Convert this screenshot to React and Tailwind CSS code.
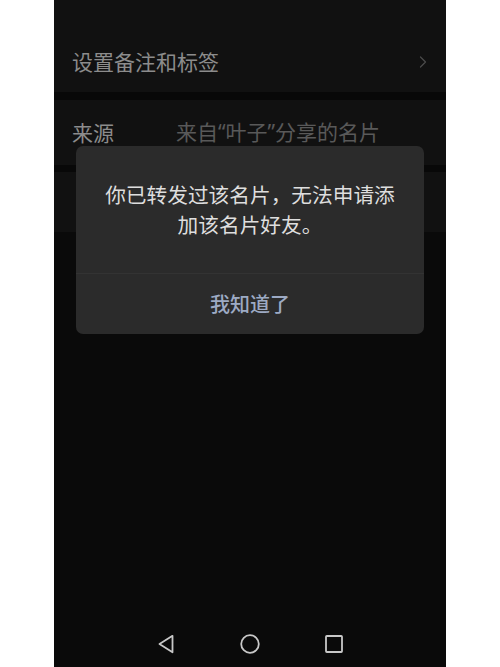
import { ChevronRight } from "lucide-react"

const FONT = "font-['Noto_Sans_CJK_SC','Noto_Sans',sans-serif]"

function Cell({ children, className = "" }) {
  return <div className={`flex items-center bg-[#111111] px-[18px] ${className}`}>{children}</div>
}

export default function App() {
  return (
    <div className={`flex h-[667px] w-[500px] justify-center bg-white ${FONT}`}>
      <div className="relative flex h-full w-[392px] flex-col bg-[#0a0a0a]">
        <Cell className="h-[92px] pt-[32px]">
          <span className="flex-1 text-[21px] text-[#8c8c8c]">设置备注和标签</span>
          <ChevronRight size={20} strokeWidth={1.5} className="mr-[-5px] text-[#4a4a4a]" />
        </Cell>
        <div className="h-[8px] bg-[#080808]" />
        <Cell className="h-[65px]">
          <span className="w-[104px] text-[21px] text-[#8c8c8c]">来源</span>
          <span className="font-['Noto_Sans','Noto_Sans_CJK_SC',sans-serif] text-[21px] text-[#595959]">来自“叶子”分享的名片</span>
        </Cell>
        <div className="h-[7px] bg-[#080808]" />
        <Cell className="h-[60px]" />

        <div className="flex-1" />
        <div className="flex h-[44px] items-center justify-center gap-[63px] pb-[2px]">
          <svg width="20" height="20" viewBox="0 0 20 20" fill="none" stroke="#c8c8c8" strokeWidth="1.8" strokeLinejoin="round">
            <path d="M16.5 1.8 L3.5 10 L16.5 18.2 Z" />
          </svg>
          <svg width="22" height="22" viewBox="0 0 22 22" fill="none" stroke="#c8c8c8" strokeWidth="1.8">
            <circle cx="11" cy="11" r="8.8" />
          </svg>
          <svg width="20" height="20" viewBox="0 0 20 20" fill="none" stroke="#c8c8c8" strokeWidth="1.8">
            <rect x="2" y="2" width="16" height="16" rx="0.8" />
          </svg>
        </div>

        <div className="absolute left-[22px] top-[146px] flex w-[348px] flex-col rounded-[7px] bg-[#2b2b2b]">
          <div className="flex h-[127px] items-center justify-center px-[16px] pb-[1px] text-center text-[20.7px] leading-[30px] text-[#dedede]">
            <p>你已转发过该名片，无法申请添<br />加该名片好友。</p>
          </div>
          <div className="h-px bg-[#333333]" />
          <div className="flex h-[60px] items-center justify-center text-[20px] font-medium text-[#9daac4]">
            我知道了
          </div>
        </div>
      </div>
    </div>
  )
}
